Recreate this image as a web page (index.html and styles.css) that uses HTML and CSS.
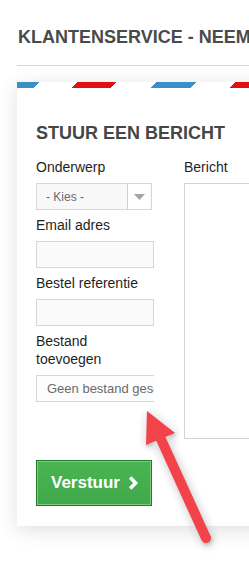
FILE: index.html
```html
<!DOCTYPE html>
<html lang="nl">
<head>
<meta charset="utf-8">
<title>Klantenservice</title>
<link rel="stylesheet" href="styles.css">
</head>
<body>
<div class="page">
  <h1 class="page-title">KLANTENSERVICE - NEEM CONTACT OP</h1>
  <hr class="rule">
  <div class="card">
    <div class="stripes"></div>
    <div class="card-body">
      <h2 class="card-title">STUUR EEN BERICHT</h2>
      <div class="form-row">
        <div class="col-left">
          <div class="field">
            <label class="label">Onderwerp</label>
            <div class="select">
              <span class="select-text">- Kies -</span>
              <span class="select-btn"><svg width="11" height="6" viewBox="0 0 11 6"><polygon points="0,0 11,0 5.5,6" fill="#a3a3a3"/></svg></span>
            </div>
          </div>
          <div class="field">
            <label class="label">Email adres</label>
            <input class="input" type="text">
          </div>
          <div class="field">
            <label class="label">Bestel referentie</label>
            <input class="input" type="text">
          </div>
          <div class="field">
            <label class="label">Bestand<br>toevoegen</label>
            <div class="file">Geen bestand geselecteerd.</div>
          </div>
        </div>
        <div class="col-right">
          <label class="label">Bericht</label>
          <textarea class="textarea"></textarea>
        </div>
      </div>
      <button class="btn" type="button">Verstuur <svg class="chev" width="11" height="14" viewBox="0 0 11 14"><polyline points="2.2,1.5 7.6,7 2.2,12.5" fill="none" stroke="#fff" stroke-width="3.6"/></svg></button>
    </div>
  </div>
</div>
<svg class="annot" width="249" height="580" viewBox="0 0 249 580">
  <g class="arrow">
    <line x1="160" y1="437" x2="206" y2="538" stroke="#f2434b" stroke-width="10" stroke-linecap="round"/>
    <polygon points="147,411 146,445 175,433" fill="#f2434b"/>
  </g>
</svg>
</body>
</html>
```
FILE: styles.css
```css
html, body {
  margin: 0;
  padding: 0;
  background: #fff;
  overflow: hidden;
}
body {
  font-family: "Liberation Sans", Arial, sans-serif;
  color: #333;
  width: 249px;
  height: 580px;
  position: relative;
}
.page {
  padding: 26px 0 0 17px;
}
.page-title {
  margin: 0 0 0 1px;
  font-size: 18px;
  line-height: 22px;
  font-weight: bold;
  color: #4a4a4a;
  white-space: nowrap;
}
.rule {
  margin: 17px 0 0 0;
  width: 420px;
  border: 0;
  border-top: 1px solid #d6d6d6;
  height: 0;
}
.card {
  margin-top: 16px;
  width: 420px;
  background: #fff;
  box-shadow: 0 4px 18px rgba(0, 0, 0, 0.13);
}
.stripes {
  height: 6px;
  background: repeating-linear-gradient(135deg,
    #3a8fc6 0 15.56px,
    #fff 15.56px 43.13px,
    #e3100f 43.13px 70.71px,
    #fff 70.71px 98.99px,
    #3a8fc6 98.99px 111.02px);
}
.card-body {
  padding: 34px 0 20px 19px;
}
.card-title {
  margin: 0 0 14px 0;
  font-size: 18px;
  line-height: 22px;
  font-weight: bold;
  color: #464646;
}
.form-row {
  display: flex;
  gap: 30px;
  align-items: flex-start;
}
.col-left {
  width: 118px;
  display: flex;
  flex-direction: column;
  gap: 6px;
}
.field {
  display: flex;
  flex-direction: column;
}
.label {
  display: block;
  font-size: 14px;
  line-height: 18px;
  color: #1f1f1f;
  margin-bottom: 7px;
}
.select {
  box-sizing: border-box;
  width: 116px;
  height: 27px;
  border: 1px solid #d7d7d7;
  background: #f8f8f8;
  display: flex;
  align-items: center;
  justify-content: space-between;
}
.select-text {
  padding-left: 9px;
  font-size: 12px;
  color: #6a6a6a;
}
.select-btn {
  box-sizing: border-box;
  width: 23px;
  height: 100%;
  margin-right: 1px;
  background: #fff;
  border-left: 1px solid #cfcfcf;
  display: flex;
  align-items: center;
  justify-content: center;
}
.input {
  box-sizing: border-box;
  width: 118px;
  height: 27px;
  margin: 0;
  border: 1px solid #d6d6d6;
  background: #fafafa;
  padding: 0;
}
.file {
  box-sizing: border-box;
  width: 118px;
  height: 27px;
  border: 1px solid #d6d6d6;
  border-right: 0;
  background: #fdfdfd;
  padding-left: 10px;
  font-size: 13px;
  line-height: 25px;
  color: #6a6a6a;
  white-space: nowrap;
  overflow: hidden;
}
.col-right {
  display: flex;
  flex-direction: column;
}
.textarea {
  box-sizing: border-box;
  width: 200px;
  height: 256px;
  margin: 0;
  border: 1px solid #d3d3d3;
  background: #fff;
  resize: none;
}
.btn {
  margin-top: 21px;
  box-sizing: border-box;
  width: 116px;
  height: 46px;
  border: 1px solid #257a28;
  box-shadow: inset 0 0 0 1px #78cc7c;
  background: linear-gradient(#4ab553, #40a84a);
  color: #fff;
  font-family: "Liberation Sans", Arial, sans-serif;
  font-size: 17px;
  font-weight: bold;
  display: flex;
  align-items: center;
  justify-content: center;
  gap: 8px;
  padding: 0 0 0 2px;
  cursor: pointer;
}
.chev {
  display: block;
}
.annot {
  position: absolute;
  left: 0;
  top: 0;
  pointer-events: none;
}
.arrow {
  filter: drop-shadow(0 0 5px rgba(255, 255, 255, 0.9)) drop-shadow(1px 2px 1.5px rgba(0, 0, 0, 0.35));
}
```
